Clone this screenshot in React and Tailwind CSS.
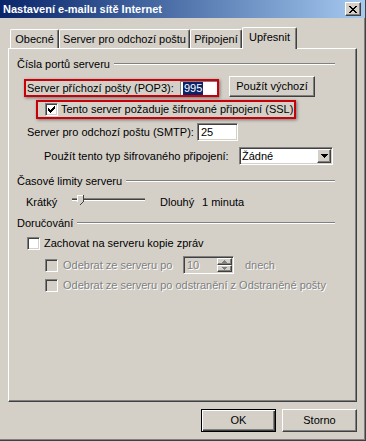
import React from "react";

const F = "font-['Liberation_Sans',Arial,sans-serif]";

function Pix({ rows, color }) {
  const out = [];
  rows.forEach((r, j) =>
    [...r].forEach((c, i) => {
      if (c === "x") out.push(<rect key={i + "-" + j} x={i} y={j} width="1" height="1" fill={color} />);
    })
  );
  return out;
}

const CHECK = ["......x", ".....xx", "x...xxx", "xx.xxx.", "xxxxx..", ".xxx...", "..x...."];
const XMARK = ["xx....xx", ".xx..xx.", "..xxxx..", "...xx...", "..xxxx..", ".xx..xx.", "xx....xx"];

const sunken =
  "border border-t-[#808080] border-l-[#808080] border-b-white border-r-white shadow-[inset_1px_1px_0_#404040,inset_-1px_-1px_0_#d4d0c8]";
const raised =
  "border border-t-white border-l-white border-b-[#404040] border-r-[#404040] shadow-[inset_-1px_-1px_0_#808080]";

function Checkbox({ checked, disabled }) {
  return (
    <div className={`w-[13px] h-[13px] shrink-0 flex items-center justify-center ${sunken} ${disabled ? "bg-[#d4d0c8]" : "bg-white"}`}>
      {checked && (
        <svg width="7" height="7" viewBox="0 0 7 7" shapeRendering="crispEdges">
          <Pix rows={CHECK} color="#000" />
        </svg>
      )}
    </div>
  );
}

function Group({ label, className }) {
  return (
    <div className={`h-[14px] flex items-center pl-[8px] pr-[21px] ${className}`}>
      <span>{label}</span>
      <div className="flex-1 ml-[4px] h-[2px] border-t border-t-[#808080] border-b border-b-white" />
    </div>
  );
}

const disabledText = "text-[#808080] [text-shadow:1px_1px_0_#fff]";

export default function App() {
  const tabs = [
    { t: "Obecné", w: "w-[49px]" },
    { t: "Server pro odchozí poštu", w: "w-[131px]" },
    { t: "Připojení", w: "w-[52px]" },
  ];
  return (
    <div className={`w-[366px] h-[441px] bg-[#d4d0c8] flex flex-col border-r border-b border-r-[#404040] border-b-[#404040] shadow-[inset_-1px_-1px_0_#808080] text-[11px] leading-[13px] text-black ${F}`}>
      {/* title bar */}
      <div className="h-[18px] shrink-0 flex items-center justify-between pl-[3px] pr-[4px] bg-linear-to-r from-[#0a246a] to-[#a6caf0]">
        <span className="text-white font-bold text-[11px]">Nastavení e-mailu sítě Internet</span>
        <div className={`w-[16px] h-[14px] bg-[#d4d0c8] flex items-center justify-center ${raised}`}>
          <svg width="8" height="7" viewBox="0 0 8 7" shapeRendering="crispEdges">
            <Pix rows={XMARK} color="#000" />
          </svg>
        </div>
      </div>

      <div className="flex flex-col px-[8px] mt-[9px]">
        {/* tabs */}
        <div className="h-[21px] flex items-end pl-[2px]">
          {tabs.map((t) => (
            <div
              key={t.t}
              className={`${t.w} h-[19px] flex items-center justify-center border-t border-l border-r border-t-white border-l-white border-r-[#404040] shadow-[inset_-1px_0_0_#808080] rounded-t-[2px]`}
            >
              {t.t}
            </div>
          ))}
          <div className="w-[55px] h-[22px] -mb-px relative z-10 bg-[#d4d0c8] flex items-center justify-center pb-[2px] border-t border-l border-r border-t-white border-l-white border-r-[#404040] shadow-[inset_-1px_0_0_#808080] rounded-t-[2px]">
            Upřesnit
          </div>
        </div>

        {/* panel */}
        <div className="h-[354px] flex flex-col border border-t-white border-l-white border-r-[#404040] border-b-[#404040] shadow-[inset_-1px_-1px_0_#808080]">
          <Group label="Čísla portů serveru" className="mt-[8px]" />

          {/* POP3 */}
          <div className="mt-[5px] h-[21px] flex items-end pl-[15px]">
            <div className="w-[195px] h-[18px] border-2 border-[#c8000a] flex items-stretch shadow-[1px_1px_3px_rgba(0,0,0,0.45)]">
              <div className="w-[154px] pl-[1px] flex items-center">Server příchozí pošty (POP3):</div>
              <div className="flex-1 bg-white flex items-center pl-[2px] border-l border-t border-l-[#808080] border-t-[#808080]">
                <span className="bg-[#0a246a] text-white px-px">995</span>
              </div>
            </div>
            <div className={`ml-[10px] w-[86px] h-[21px] flex items-center justify-center ${raised}`}>Použít výchozí</div>
          </div>

          {/* SSL */}
          <div className="mt-[3px] h-[19px] flex pl-[27px]">
            <div className="w-[260px] h-[19px] border-2 border-[#c8000a] flex items-center pl-[7px] shadow-[1px_1px_3px_rgba(0,0,0,0.45)]">
              <Checkbox checked />
              <span className="ml-[3px]">Tento server požaduje šifrované připojení (SSL)</span>
            </div>
          </div>

          {/* SMTP */}
          <div className="mt-[4px] h-[18px] flex items-center pl-[18px]">
            <div className="w-[170px]">Server pro odchozí poštu (SMTP):</div>
            <div className={`w-[41px] h-[18px] bg-white flex items-center pl-[3px] ${sunken}`}>25</div>
          </div>

          {/* encryption */}
          <div className="mt-[6px] h-[18px] flex items-center pl-[35px]">
            <div className="w-[195px]">Použít tento typ šifrovaného připojení:</div>
            <div className={`w-[94px] h-[18px] bg-white flex items-center justify-between pl-[2px] pr-[1px] ${sunken}`}>
              <span>Žádné</span>
              <div className={`w-[14px] h-[14px] bg-[#d4d0c8] flex items-center justify-center ${raised}`}>
                <svg width="7" height="4" viewBox="0 0 7 4" shapeRendering="crispEdges">
                  <path d="M0 0h7v1h-1v1h-1v1h-1v1h-1v-1h-1v-1h-1v-1h-1z" fill="#000" />
                </svg>
              </div>
            </div>
          </div>

          <Group label="Časové limity serveru" className="mt-[9px]" />

          {/* slider */}
          <div className="mt-[7px] h-[14px] flex items-center pl-[17px]">
            <div className="w-[46px]">Krátký</div>
            <div className="w-[73px] h-[14px] relative flex items-center">
              <div className="w-full h-[3px] border-t border-t-[#808080] border-b border-b-white bg-[#404040] -mt-[6px]" />
              <svg className="absolute left-[5px] top-0" width="7" height="10" viewBox="0 0 7 10" shapeRendering="crispEdges">
                <path d="M0 0h7v6l-3 4l-3-4h0z" fill="#d4d0c8" />
                <path d="M0 0h6v1h-5v6h-1z" fill="#fff" />
                <path d="M6 0h1v7h-1v1h-1v1h-1v1h-1v-1h1v-1h1v-1h1z" fill="#404040" />
              </svg>
            </div>
            <div className="ml-[15px] w-[42px]">Dlouhý</div>
            <div>1 minuta</div>
          </div>

          <Group label="Doručování" className="mt-[7px]" />

          <div className="mt-[6px] h-[14px] flex items-center pl-[18px]">
            <Checkbox />
            <span className="ml-[4px]">Zachovat na serveru kopie zpráv</span>
          </div>

          <div className="mt-[6px] h-[18px] flex items-center pl-[36px]">
            <Checkbox disabled />
            <span className={`ml-[5px] w-[120px] ${disabledText}`}>Odebrat ze serveru po</span>
            <div className={`w-[51px] h-[18px] bg-[#d4d0c8] flex items-center justify-between pl-[3px] pr-px ${sunken}`}>
              <span className={disabledText}>10</span>
              <div className="flex flex-col w-[15px] h-[14px]">
                <div className={`h-[7px] bg-[#d4d0c8] flex items-center justify-center ${raised}`}>
                  <svg width="5" height="3" viewBox="0 0 5 3" shapeRendering="crispEdges">
                    <path d="M2 0h1v1h1v1h1v1h-5v-1h1v-1h1z" fill="#808080" />
                  </svg>
                </div>
                <div className={`h-[7px] bg-[#d4d0c8] flex items-center justify-center ${raised}`}>
                  <svg width="5" height="3" viewBox="0 0 5 3" shapeRendering="crispEdges">
                    <path d="M0 0h5v1h-1v1h-1v1h-1v-1h-1v-1h-1z" fill="#808080" />
                  </svg>
                </div>
              </div>
            </div>
            <span className={`ml-[11px] ${disabledText}`}>dnech</span>
          </div>

          <div className="mt-[4px] h-[14px] flex items-center pl-[36px]">
            <Checkbox disabled />
            <span className={`ml-[5px] ${disabledText}`}>Odebrat ze serveru po odstranění z Odstraněné pošty</span>
          </div>
        </div>

        {/* buttons */}
        <div className="mt-[7px] flex justify-end gap-[6px]">
          <div className="w-[75px] h-[23px] flex items-center justify-center border border-black shadow-[inset_1px_1px_0_#fff,inset_-1px_-1px_0_#404040,inset_-2px_-2px_0_#808080]">
            OK
          </div>
          <div className={`w-[75px] h-[23px] flex items-center justify-center ${raised}`}>Storno</div>
        </div>
      </div>
    </div>
  );
}
